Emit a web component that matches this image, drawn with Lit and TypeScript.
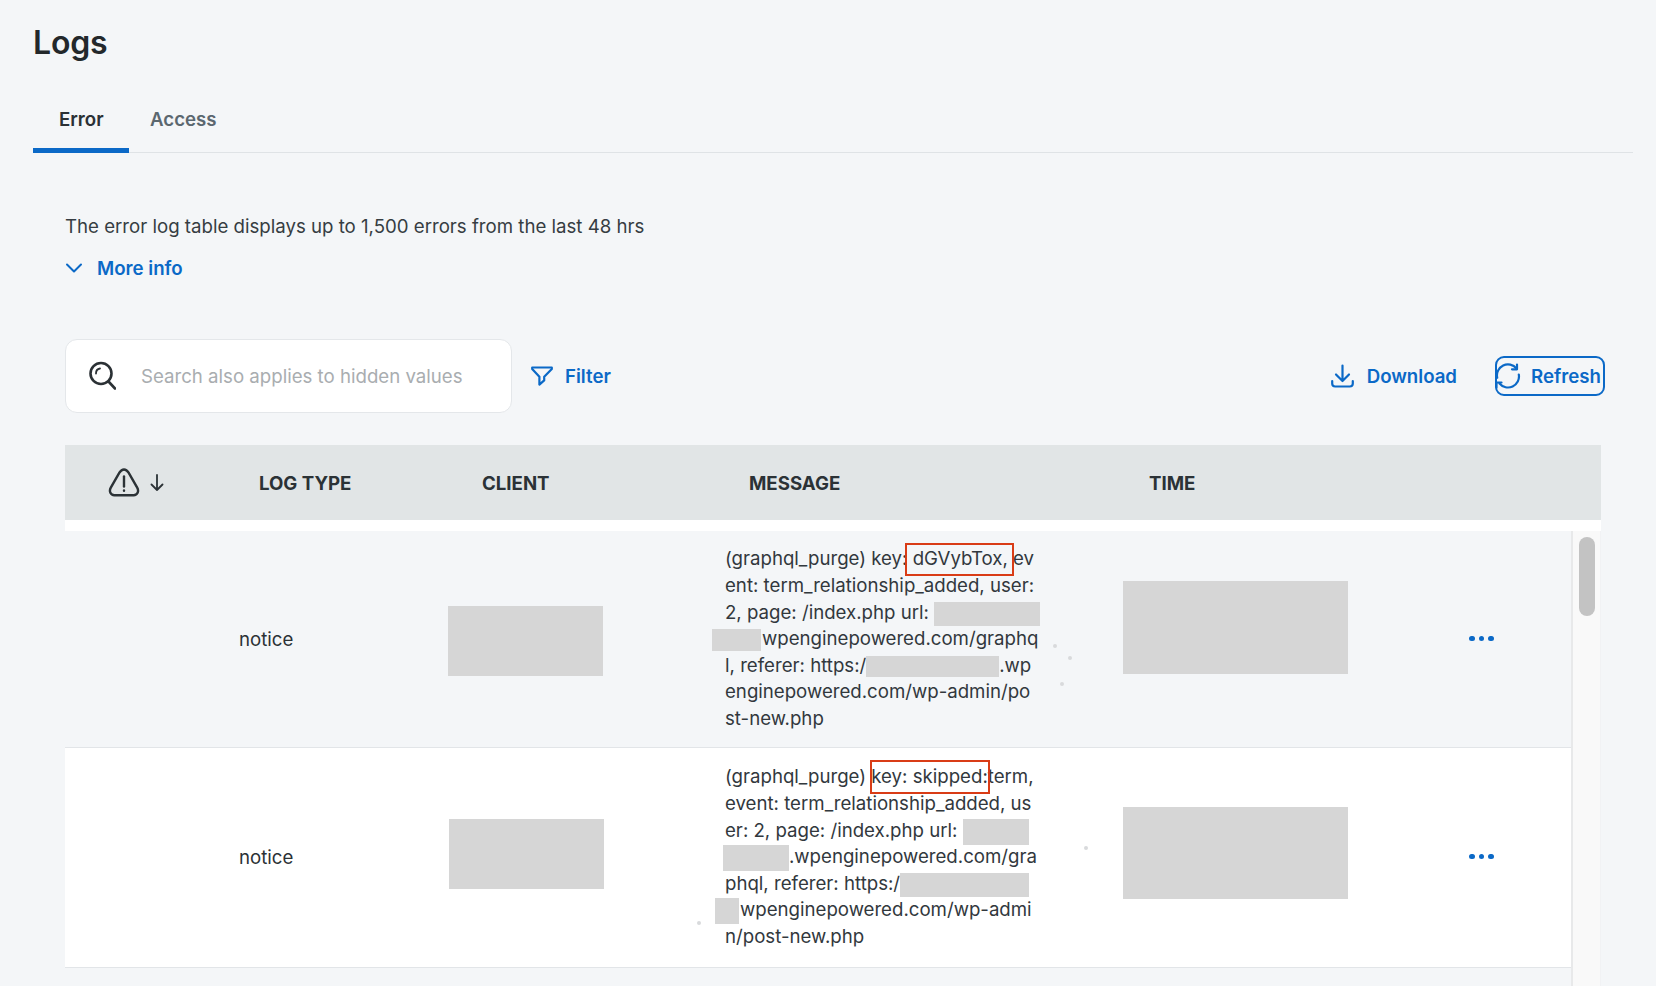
import { LitElement, html, css } from "lit";
import { customElement } from "lit/decorators.js";

type Seg =
  | { t: string }
  | { r: number; h: number; ml?: number; mr?: number }
  | { m: string; l: number; rr: number; top: number; bot: number };

interface Row {
  cls: string;
  client: [number, number, number];
  time: [number, number];
  lines: Seg[][];
  specks: [number, number][];
}

const rows: Row[] = [
  {
    cls: "hover",
    client: [0, 75, 70],
    time: [50, 93],
    specks: [[988, 113], [1003, 125], [995, 151]],
    lines: [
      [{ t: "(graphql_purge) key:" }, { t: " " }, { m: "dGVybTox,", l: 8, rr: 6, top: 2, bot: 4 }, { t: " ev" }],
      [{ t: "ent: term_relationship_added, user:" }],
      [{ t: "2, page: /index.php url: " }, { r: 106, h: 24 }],
      [{ r: 49, h: 22, ml: -13, mr: 1 }, { t: "wpenginepowered.com/graphq" }],
      [{ t: "l, referer: https:/" }, { r: 133, h: 21 }, { t: ".wp" }],
      [{ t: "enginepowered.com/wp-admin/po" }],
      [{ t: "st-new.php" }],
    ],
  },
  {
    cls: "",
    client: [1, 71, 70],
    time: [59, 92],
    specks: [[1019, 98], [632, 173]],
    lines: [
      [{ t: "(graphql_purge) " }, { m: "key: skipped:", l: 1, rr: 2, top: 3, bot: 4 }, { t: "term," }],
      [{ t: "event: term_relationship_added, us" }],
      [{ t: "er: 2, page: /index.php url: " }, { r: 66, h: 26 }],
      [{ r: 66, h: 26, ml: -2 }, { t: ".wpenginepowered.com/gra" }],
      [{ t: "phql, referer: https:/" }, { r: 129, h: 24 }],
      [{ r: 24, h: 26, ml: -10, mr: 1 }, { t: "wpenginepowered.com/wp-admi" }],
      [{ t: "n/post-new.php" }],
    ],
  },
];

@customElement("app-root")
export class AppRoot extends LitElement {
  static styles = css`
    :host {
      display: block;
      width: 1656px;
      height: 986px;
      overflow: hidden;
      background: #f4f6f8;
      font-family: Inter, "Liberation Sans", sans-serif;
      color: #2b3135;
      font-size: 18.65px;
    }
    .page {
      padding: 23px 23px 0 33px;
    }
    h1 {
      margin: 0;
      font-size: 32px;
      line-height: 40px;
      font-weight: 600;
      color: #23282b;
      letter-spacing: -0.2px;
    }
    .tabs {
      display: flex;
      margin-top: 34px;
      height: 55px;
      border-bottom: 1px solid #dfe3e6;
    }
    .tab {
      width: 96px;
      box-sizing: border-box;
      padding: 0 0 0 26px;
      height: 56px;
      line-height: 44px;
      font-weight: 600;
      color: #5b676f;
      white-space: nowrap;
    }
    .tab.on {
      color: #2b3135;
      border-bottom: 5px solid #0b69c7;
      border-radius: 3px 3px 0 0;
    }
    .tab.two {
      padding-left: 21px;
    }
    .body {
      padding: 60px 29px 0 32px;
    }
    .desc {
      line-height: 26px;
      color: #363d42;
    }
    .more {
      display: flex;
      align-items: center;
      gap: 14px;
      margin-top: 16px;
      line-height: 26px;
      font-weight: 600;
      color: #0b69c7;
    }
    .toolbar {
      display: flex;
      align-items: center;
      margin-top: 58px;
      height: 74px;
    }
    .search {
      width: 447px;
      height: 74px;
      box-sizing: border-box;
      border: 1px solid #e4e7ea;
      border-radius: 12px;
      background: #fff;
      display: flex;
      align-items: center;
      padding-left: 22px;
      gap: 25px;
      color: #a9adb0;
      white-space: nowrap;
    }
    .action {
      display: flex;
      align-items: center;
      color: #0b69c7;
      font-weight: 600;
      white-space: nowrap;
    }
    .filter {
      margin-left: 19px;
      gap: 12px;
    }
    .spacer {
      flex: 1;
    }
    .download {
      gap: 13px;
      margin-right: 38px;
    }
    .refresh {
      box-sizing: border-box;
      width: 110px;
      height: 40px;
      margin-right: -1px;
      border: 2px solid #0b69c7;
      border-radius: 9px;
      gap: 10px;
    }
    .refresh svg {
      margin-left: -2px;
    }
    .table {
      margin-top: 32px;
      margin-right: 3px;
    }
    .thead {
      display: grid;
      grid-template-columns: 151px 223px 267px 400px 1fr;
      align-items: center;
      height: 75px;
      padding-left: 43px;
      background: #e1e5e6;
      font-weight: 700;
      color: #2b3236;
      white-space: nowrap;
    }
    .sort {
      display: flex;
      align-items: center;
      gap: 10px;
    }
    .band {
      height: 11px;
      background: #fff;
    }
    .scroller {
      display: flex;
      height: 455px;
      overflow: hidden;
    }
    .rows {
      width: 1506px;
      flex: none;
    }
    .row {
      position: relative;
      display: grid;
      grid-template-columns: 174px 209px 277px 398px 345px 1fr;
      align-items: center;
      background: #fff;
      border-bottom: 1px solid #e2e5e8;
      box-sizing: border-box;
      height: 220px;
      padding-bottom: 2px;
    }
    .row.hover {
      background: #f4f6f8;
      height: 217px;
      padding-bottom: 1px;
    }
    .row.rest {
      background: #f4f6f8;
      border: 0;
      height: 40px;
      padding: 0;
    }
    .redact {
      background: #d6d6d6;
    }
    .block {
      align-self: start;
    }
    .msg {
      grid-column: 4;
      line-height: 26.6px;
      white-space: nowrap;
      color: #32383d;
    }
    .line {
      display: block;
      height: 26.6px;
    }
    .inl {
      display: inline-block;
      vertical-align: middle;
    }
    .marked {
      position: relative;
      display: inline-block;
    }
    .box {
      position: absolute;
      border: 2px solid #d93c16;
    }
    .dots {
      display: flex;
      gap: 4px;
      margin-left: 1px;
    }
    .dots i {
      width: 5.5px;
      height: 5.5px;
      border-radius: 50%;
      background: #0b69c7;
    }
    .speck {
      position: absolute;
      width: 4px;
      height: 4px;
      border-radius: 50%;
      background: #d8dadc;
    }
    .track {
      position: relative;
      flex: none;
      width: 32px;
      box-sizing: border-box;
      background: #f9f9f9;
      border-left: 2px solid #e8e9ea;
      border-right: 3px solid #f1f2f4;
    }
    .thumb {
      position: absolute;
      left: 6px;
      top: 6px;
      width: 16px;
      height: 79px;
      border-radius: 8px;
      background: #c3c3c3;
    }
    svg {
      display: block;
      flex: none;
    }
  `;

  private seg(s: Seg) {
    if ("t" in s) return s.t;
    if ("r" in s) {
      return html`<span
        class="redact inl"
        style="width:${s.r}px;height:${s.h}px;margin-left:${s.ml ?? 0}px;margin-right:${s.mr ?? 0}px"
      ></span>`;
    }
    return html`<span class="marked"
      >${s.m}<span
        class="box"
        style="left:${-s.l}px;right:${-s.rr}px;top:${-s.top}px;bottom:${-s.bot}px"
      ></span
    ></span>`;
  }

  private row(r: Row) {
    return html`<div class="row ${r.cls}">
      <div></div>
      <div>notice</div>
      <div
        class="redact block"
        style="width:155px;height:${r.client[2]}px;margin-top:${r.client[1]}px;margin-left:${r.client[0]}px"
      ></div>
      <div class="msg">
        ${r.lines.map(
          (l) => html`<span class="line">${l.map((s) => this.seg(s))}</span>`
        )}
      </div>
      <div
        class="redact block"
        style="width:225px;height:${r.time[1]}px;margin-top:${r.time[0]}px"
      ></div>
      <div class="dots"><i></i><i></i><i></i></div>
      ${r.specks.map(
        (p) => html`<span class="speck" style="left:${p[0]}px;top:${p[1]}px"></span>`
      )}
    </div>`;
  }

  render() {
    return html`<div class="page">
      <h1>Logs</h1>
      <div class="tabs">
        <div class="tab on">Error</div>
        <div class="tab two">Access</div>
      </div>
      <div class="body">
        <div class="desc">The error log table displays up to 1,500 errors from the last 48 hrs</div>
        <div class="more">
          <svg width="18" height="12" viewBox="0 0 18 12" fill="none" stroke="#0b69c7" stroke-width="2" stroke-linecap="round" stroke-linejoin="round">
            <path d="M2 2.500l7 7 7-7" />
          </svg>
          More info
        </div>
        <div class="toolbar">
          <div class="search">
            <svg width="28" height="30" viewBox="0 0 28 30" fill="none" stroke="#2b3135" stroke-linecap="round">
              <circle cx="13" cy="12.500" r="10.500" stroke-width="2.600" />
              <path d="M20.500 20.500l6.500 7" stroke-width="2.600" />
              <path d="M8 12.500c0-2.600 1.600-4.600 4-5" stroke-width="1.800" />
            </svg>
            Search also applies to hidden values
          </div>
          <div class="action filter">
            <svg width="22" height="20" viewBox="0 0 22 20" fill="none" stroke="#0b69c7" stroke-width="2.200" stroke-linejoin="round">
              <path d="M1.200 1.500h19.600v1.400L13.200 10.800v3.600L8.400 18.600V10.800L1.200 2.900z" />
            </svg>
            Filter
          </div>
          <div class="spacer"></div>
          <div class="action download">
            <svg width="23" height="24" viewBox="0 0 23 24" fill="none" stroke="#0b69c7" stroke-width="2.200" stroke-linecap="round" stroke-linejoin="round">
              <path d="M11.500 1.500v15M5 10.500l6.500 6.500 6.500-6.500" />
              <path d="M1.200 17v2.500a3 3 0 0 0 3 3h14.600a3 3 0 0 0 3-3V17" />
            </svg>
            Download
          </div>
          <div class="action refresh">
            <svg width="26" height="26" viewBox="0 0 26 26" fill="none" stroke="#0b69c7" stroke-width="2.200" stroke-linecap="round" stroke-linejoin="round">
              <path d="M21.500 5.500A11 11 0 0 0 2.200 14.800" />
              <path d="M23.800 11.500A11 11 0 0 1 4.500 20.500" />
              <path d="M22 1.500v4.800h-5" />
              <path d="M1.500 24.500v-5h5" />
            </svg>
            Refresh
          </div>
        </div>
        <div class="table">
          <div class="thead">
            <div class="sort">
              <svg width="32" height="29" viewBox="0 0 32 29" fill="none" stroke="#2b3236" stroke-width="2.400" stroke-linecap="round" stroke-linejoin="round">
                <path d="M16 1.500c2 0 3.400 1.200 4.600 3.200l8.600 15c2 3.600.3 7.400-3.600 7.600H6.400c-3.900-.2-5.600-4-3.600-7.600l8.600-15C12.600 2.700 14 1.500 16 1.500z" />
                <path d="M16 8.500v10" />
                <path d="M16 22.500v.3" />
              </svg>
              <svg width="14" height="17" viewBox="0 0 14 17" fill="none" stroke="#2b3236" stroke-width="1.800" stroke-linecap="round" stroke-linejoin="round">
                <path d="M7 1v15M1.500 10.500L7 16l5.500-5.500" />
              </svg>
            </div>
            <div>LOG TYPE</div>
            <div>CLIENT</div>
            <div>MESSAGE</div>
            <div>TIME</div>
          </div>
          <div class="band"></div>
          <div class="scroller">
            <div class="rows">
              ${rows.map((r) => this.row(r))}
              <div class="row rest"></div>
            </div>
            <div class="track"><div class="thumb"></div></div>
          </div>
        </div>
      </div>
    </div>`;
  }
}
